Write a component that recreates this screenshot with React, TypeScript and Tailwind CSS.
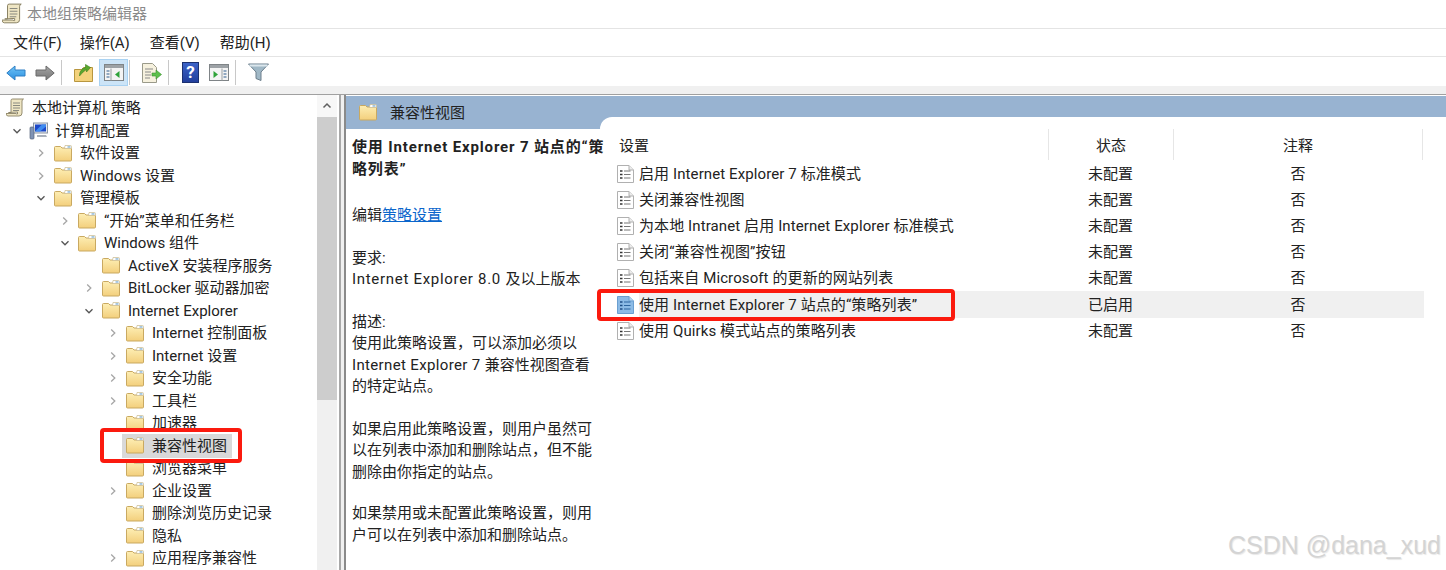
import React from 'react';

const Chevron: React.FC<{ open?: boolean }> = ({ open }) => (
    <svg width="10" height="10" viewBox="0 0 10 10" fill="none" stroke={open ? '#555' : '#a6a6a6'} strokeWidth="1.3">
        {open ? <path d="M1.5 3.2 5 6.8 8.5 3.2" /> : <path d="M3.2 1.5 6.8 5 3.2 8.5" />}
    </svg>
);

const Folder: React.FC = () => (
    <svg width="18" height="17" viewBox="0 0 18 17" className="shrink-0">
        <defs>
            <linearGradient id="fld" x1="0" y1="0" x2="0" y2="1">
                <stop offset="0" stopColor="#fdeeb4" />
                <stop offset="1" stopColor="#f3cf7c" />
            </linearGradient>
        </defs>
        <path d="M.5 2.5q0-1 1-1h5l1.5 1.500h8.500q1 0 1 1v11q0 1-1 1h-15q-1 0-1-1z" fill="url(#fld)" stroke="#c9a961" />
        <path d="M11 .5h5.500q1 0 1 1v2h-7z" fill="#fff" stroke="#c9b98d" strokeWidth=".7" />
        <rect x="13.500" y="1.200" width="3" height="1.500" fill="#8fb8d8" />
    </svg>
);

const Scroll: React.FC<{ large?: boolean }> = ({ large }) => (
    <svg width={large ? 22 : 20} height={large ? 22 : 20} viewBox="0 0 20 20" className="shrink-0">
        <path d="M5 2.500q0-1.500 1.500-1.500h11q-1.500.5-1.500 2v12q0 3-3 3h-11q-2-.3-2-2.500h10q1 1 1.500.5V14l-9 .5H5z" fill="#efe6c4" stroke="#8a8264" strokeWidth=".9" />
        <path d="M7 5h7M7 7.500h7M7 10h7M7 12.500h6" stroke="#8a8a80" strokeWidth="1" />
    </svg>
);

const Computer: React.FC = () => (
    <svg width="20" height="18" viewBox="0 0 20 18" className="shrink-0">
        <rect x="4.500" y="1" width="14" height="10" fill="#e4e8ee" stroke="#8b95a3" />
        <path d="M6 2.500h11v7H6z" fill="#1c48c8" />
        <path d="M6 9.500 13 2.500h4v2l-6 5z" fill="#3f8cf0" />
        <path d="M8 13h9l1 2H8z" fill="#a9b0ba" />
        <rect x="1" y="5" width="4" height="12" rx="1" fill="#7f93b4" stroke="#56647c" strokeWidth=".7" />
    </svg>
);

const PolicyIcon: React.FC<{ active?: boolean }> = ({ active }) => (
    <svg width="17" height="18" viewBox="0 0 17 18" className="shrink-0">
        <path d="M.5.500h11.500l4.500 4.500v12.500H.5z" fill={active ? '#8cbbe6' : '#fff'} stroke={active ? '#6b9fd0' : '#b0b0b0'} />
        <path d="M12 .500v4.500h4.500" fill={active ? '#b8d6f0' : '#ececec'} stroke={active ? '#6b9fd0' : '#b0b0b0'} />
        <path d="M3 6h2.500M3 9.500h2.500M3 13h2.500" stroke={active ? '#1f4f86' : '#333'} strokeWidth="1.600" />
        <path d="M7 6h6.500M7 9.500h6.500M7 13h6.500" stroke={active ? '#2d659f' : '#777'} strokeWidth="1" />
    </svg>
);

const ArrowIcon: React.FC<{ dir: 'left' | 'right'; id: string; from: string; to: string; edge: string }> = ({ dir, id, from, to, edge }) => (
    <svg width="20" height="16" viewBox="0 0 20 16" className={dir === 'right' ? '-scale-x-100' : ''}>
        <defs>
            <linearGradient id={id} x1="0" y1="0" x2="0" y2="1">
                <stop offset="0" stopColor={from} />
                <stop offset="1" stopColor={to} />
            </linearGradient>
        </defs>
        <path d="M.8 8 9 1v4h10v6H9v4z" fill={`url(#${id})`} stroke={edge} />
    </svg>
);

const PaneIcon: React.FC<{ flip?: boolean }> = ({ flip }) => (
    <svg width="20" height="17" viewBox="0 0 20 17" className={flip ? '-scale-x-100' : ''}>
        <rect x=".5" y=".5" width="19" height="16" fill="#f4f4f4" stroke="#7f8487" />
        <rect x="1" y="1" width="18" height="3" fill="#9da2a6" />
        <path d="M7 4.500v12" stroke="#9aa0a4" />
        <path d="M2.500 7h3M2.500 10h3M2.500 13h3" stroke="#6f8fb0" strokeWidth="1.300" />
        <path d="M15.500 7v7l-4.500-3.500z" fill="#2fa33a" />
    </svg>
);

const tree: { depth: number; label: string; arrow?: 'open' | 'closed'; selected?: boolean; icon?: 'scroll' | 'pc' }[] = [
    { depth: 0, label: '本地计算机 策略', icon: 'scroll' },
    { depth: 1, label: '计算机配置', arrow: 'open', icon: 'pc' },
    { depth: 2, label: '软件设置', arrow: 'closed' },
    { depth: 2, label: 'Windows 设置', arrow: 'closed' },
    { depth: 2, label: '管理模板', arrow: 'open' },
    { depth: 3, label: '“开始”菜单和任务栏', arrow: 'closed' },
    { depth: 3, label: 'Windows 组件', arrow: 'open' },
    { depth: 4, label: 'ActiveX 安装程序服务' },
    { depth: 4, label: 'BitLocker 驱动器加密', arrow: 'closed' },
    { depth: 4, label: 'Internet Explorer', arrow: 'open' },
    { depth: 5, label: 'Internet 控制面板', arrow: 'closed' },
    { depth: 5, label: 'Internet 设置', arrow: 'closed' },
    { depth: 5, label: '安全功能', arrow: 'closed' },
    { depth: 5, label: '工具栏', arrow: 'closed' },
    { depth: 5, label: '加速器' },
    { depth: 5, label: '兼容性视图', selected: true },
    { depth: 5, label: '浏览器菜单' },
    { depth: 5, label: '企业设置', arrow: 'closed' },
    { depth: 5, label: '删除浏览历史记录' },
    { depth: 5, label: '隐私' },
    { depth: 5, label: '应用程序兼容性', arrow: 'closed' },
];

const indent = ['pl-[6px]', 'pl-[11px]', 'pl-[35px]', 'pl-[59px]', 'pl-[83px]', 'pl-[107px]'];

const policies = [
    { name: '启用 Internet Explorer 7 标准模式', state: '未配置' },
    { name: '关闭兼容性视图', state: '未配置' },
    { name: '为本地 Intranet 启用 Internet Explorer 标准模式', state: '未配置' },
    { name: '关闭“兼容性视图”按钮', state: '未配置' },
    { name: '包括来自 Microsoft 的更新的网站列表', state: '未配置' },
    { name: '使用 Internet Explorer 7 站点的“策略列表”', state: '已启用', active: true },
    { name: '使用 Quirks 模式站点的策略列表', state: '未配置' },
];

const Sep = () => <div className="w-px h-[25px] bg-[#c8c8c8]" />;

export default function App() {
    return (
        <div className="relative w-[1446px] h-[570px] overflow-hidden bg-white text-[15px] leading-[22px] text-[#222] font-['Roboto','Noto_Sans_CJK_SC',sans-serif]">
            {/* Title bar */}
            <div className="h-[28px] flex items-center pl-[2px] gap-[3px] text-[#8a8a8a]">
                <Scroll large />
                <span>本地组策略编辑器</span>
            </div>

            {/* Menu */}
            <div className="h-[29px] flex items-center pl-[13px] gap-[20px] border-y border-[#e4e4e4]">
                <span className="-mr-[2px]">文件(F)</span>
                <span>操作(A)</span>
                <span>查看(V)</span>
                <span>帮助(H)</span>
            </div>

            {/* Toolbar */}
            <div className="h-[29px] flex items-center pl-[6px] pt-[2px]">
                <ArrowIcon dir="left" id="back" from="#6fc4f7" to="#2b8fe0" edge="#2f7fc4" />
                <div className="w-[9px]" />
                <ArrowIcon dir="right" id="fwd" from="#a5a5a5" to="#777" edge="#6b6b6b" />
                <div className="w-[6px]" />
                <Sep />
                <div className="w-[12px]" />
                <svg width="19" height="19" viewBox="0 0 19 19">
                    <path d="M.5 6.500h7l2-2h9v14H.5z" fill="#f3d27c" stroke="#b8963f" />
                    <path d="M5.500 13q0-7 6-8.500V1.500l5 3-4 4.500V6.500q-3 1.500-7 6.500z" fill="#58a82e" stroke="#3c7e1c" strokeWidth=".6" />
                </svg>
                <div className="w-[6px]" />
                <div className="w-[29px] h-[27px] flex items-center justify-center bg-[#cce4f7] border border-[#a9d2f2]">
                    <PaneIcon />
                </div>
                <div className="w-[1px]" />
                <Sep />
                <div className="w-[11px]" />
                <svg width="21" height="20" viewBox="0 0 21 20">
                    <path d="M1.500.500h10l4 4v15h-14z" fill="#f6f1de" stroke="#9a9a8a" />
                    <path d="M4 6h8M4 9h6M4 12h6M4 15h5" stroke="#8a8a8a" />
                    <path d="M11 10h4V7l5.500 4.500L15 16v-3h-4z" fill="#5cc04a" stroke="#3c9030" strokeWidth=".6" />
                </svg>
                <div className="w-[6px]" />
                <Sep />
                <div className="w-[13px]" />
                <div className="w-[17px] h-[21px] bg-gradient-to-b from-[#3c63c8] to-[#223f9c] border border-[#1b3070] text-white text-[17px] leading-[19px] font-bold text-center">?</div>
                <div className="w-[10px]" />
                <PaneIcon flip />
                <div className="w-[6px]" />
                <Sep />
                <div className="w-[12px]" />
                <svg width="21" height="19" viewBox="0 0 21 19">
                    <path d="M.5 1h20l-7.500 8v8.500l-5-2V9z" fill="#a0b8c6" stroke="#6d7f8c" />
                    <path d="M1.500 1.500h18v2h-18z" fill="#dbe6ec" />
                </svg>
            </div>

            {/* Gray strip */}
            <div className="h-[9px] bg-[#f0f0f0] border-b border-[#a0a0a0]" />

            <div className="flex h-[476px]">
                {/* Tree pane */}
                <div className="w-[337px] shrink-0 flex">
                    <div className="w-[317px] shrink-0 pt-[2px]">
                        {tree.map((n) => (
                            <div key={n.label} className={`h-[22.500px] flex items-center ${indent[n.depth]}`}>
                                {n.depth > 0 && (
                                    <span className="w-[12px] mr-[6px] flex justify-center shrink-0">
                                        {n.arrow && <Chevron open={n.arrow === 'open'} />}
                                    </span>
                                )}
                                <div className={`flex items-center h-[24px] pr-[5px] -ml-[3px] pl-[3px] ${n.selected ? 'bg-[#d9d9d9]' : ''}`}>
                                    {n.icon === 'scroll' ? <Scroll /> : n.icon === 'pc' ? <Computer /> : <span className="ml-[1px] mr-[2px] flex"><Folder /></span>}
                                    <span className="ml-[6px] whitespace-nowrap">{n.label}</span>
                                </div>
                            </div>
                        ))}
                    </div>
                    <div className="flex-1 bg-[#f0f0f0] flex flex-col">
                        <div className="h-[22px] bg-[#f7f7f7] flex items-center justify-center">
                            <svg width="10" height="10" viewBox="0 0 10 10" fill="none" stroke="#606060" strokeWidth="1.500"><path d="M1.500 6.500 5 3l3.500 3.500" /></svg>
                        </div>
                        <div className="h-[283px] bg-[#cdcdcd]" />
                    </div>
                </div>

                {/* Splitter */}
                <div className="w-[7px] shrink-0 flex">
                    <div className="w-[2px] bg-white" />
                    <div className="w-[2px] bg-[#a8a8a8]" />
                    <div className="w-[3px] bg-[#f0f0f0]" />
                </div>

                {/* Right pane */}
                <div className="flex-1 flex flex-col border-l-2 border-[#8a8a8a] min-w-0">
                    <div className="mt-[1px] h-[33px] shrink-0 flex items-end bg-[#98b3d1]">
                        <div className="w-[254px] h-full shrink-0 flex items-center pl-[13px] gap-[13px]">
                            <Folder />
                            <span>兼容性视图</span>
                        </div>
                        <div className="flex-1 h-[12px] bg-white rounded-tl-[12px]" />
                    </div>

                    <div className="flex flex-1 min-h-0">
                        {/* Description */}
                        <div className="w-[258px] shrink-0 pl-[6px] pt-[8px] leading-[21.500px]">
                            <p className="font-bold tracking-[0.85px] whitespace-nowrap">使用 Internet Explorer 7 站点的“策<br />略列表”</p>
                            <p className="mt-[25px]">编辑<span className="text-[#0a66cc] underline">策略设置</span></p>
                            <p className="mt-[21px]">要求:<br /><span className="tracking-[0.7px]">Internet Explorer 8.0 </span>及以上版本</p>
                            <p className="mt-[21px]">描述:<br />使用此策略设置，可以添加必须以<br /><span className="tracking-[0.35px]">Internet Explorer 7 </span>兼容性视图查看<br />的特定站点。</p>
                            <p className="mt-[21px]">如果启用此策略设置，则用户虽然可以在列表中添加和删除站点，但不能删除由你指定的站点。</p>
                            <p className="mt-[20px]">如果禁用或未配置此策略设置，则用户可以在列表中添加和删除站点。</p>
                        </div>

                        {/* List */}
                        <div className="flex-1 pl-[13px] pr-[22px] min-w-0">
                            <div className="h-[31px] mb-[0.5px] flex items-center">
                                <div className="w-[431px] pl-[2px] pt-[2px]">设置</div>
                                <div className="w-[125px] h-full pt-[2px] flex items-center justify-center border-l border-[#e6e6e6]">状态</div>
                                <div className="w-[250px] h-full pt-[2px] flex items-center justify-center border-x border-[#e6e6e6]">注释</div>
                            </div>
                            {policies.map((p) => (
                                <div key={p.name} className={`h-[26.200px] flex items-center ${p.active ? 'bg-[#f0f0f0]' : ''}`}>
                                    <div className="w-[431px] h-full flex items-center">
                                        <span className="w-[22px] h-full bg-white flex items-center">
                                            <PolicyIcon active={p.active} />
                                        </span>
                                        <span className="whitespace-nowrap tracking-[0.1px]">{p.name}</span>
                                    </div>
                                    <div className="w-[125px] text-center">{p.state}</div>
                                    <div className="w-[250px] text-center">否</div>
                                </div>
                            ))}
                        </div>
                    </div>
                </div>
            </div>

            {/* Red annotation boxes */}
            <div className="absolute left-[100px] top-[428px] w-[142px] h-[35px] border-[4px] border-[#fb1a0e] rounded-[4px]" />
            <div className="absolute left-[597px] top-[289px] w-[358px] h-[32px] border-[4px] border-[#fb1a0e] rounded-[4px]" />

            {/* Watermark */}
            <div className="absolute left-[1228px] top-[527px] text-[25px] leading-[36px] text-[#d4d4d4] font-['Liberation_Sans',sans-serif] whitespace-nowrap [text-shadow:1px_1px_1px_#e8e8e8]">
                CSDN @dana_xud
            </div>
        </div>
    );
}
